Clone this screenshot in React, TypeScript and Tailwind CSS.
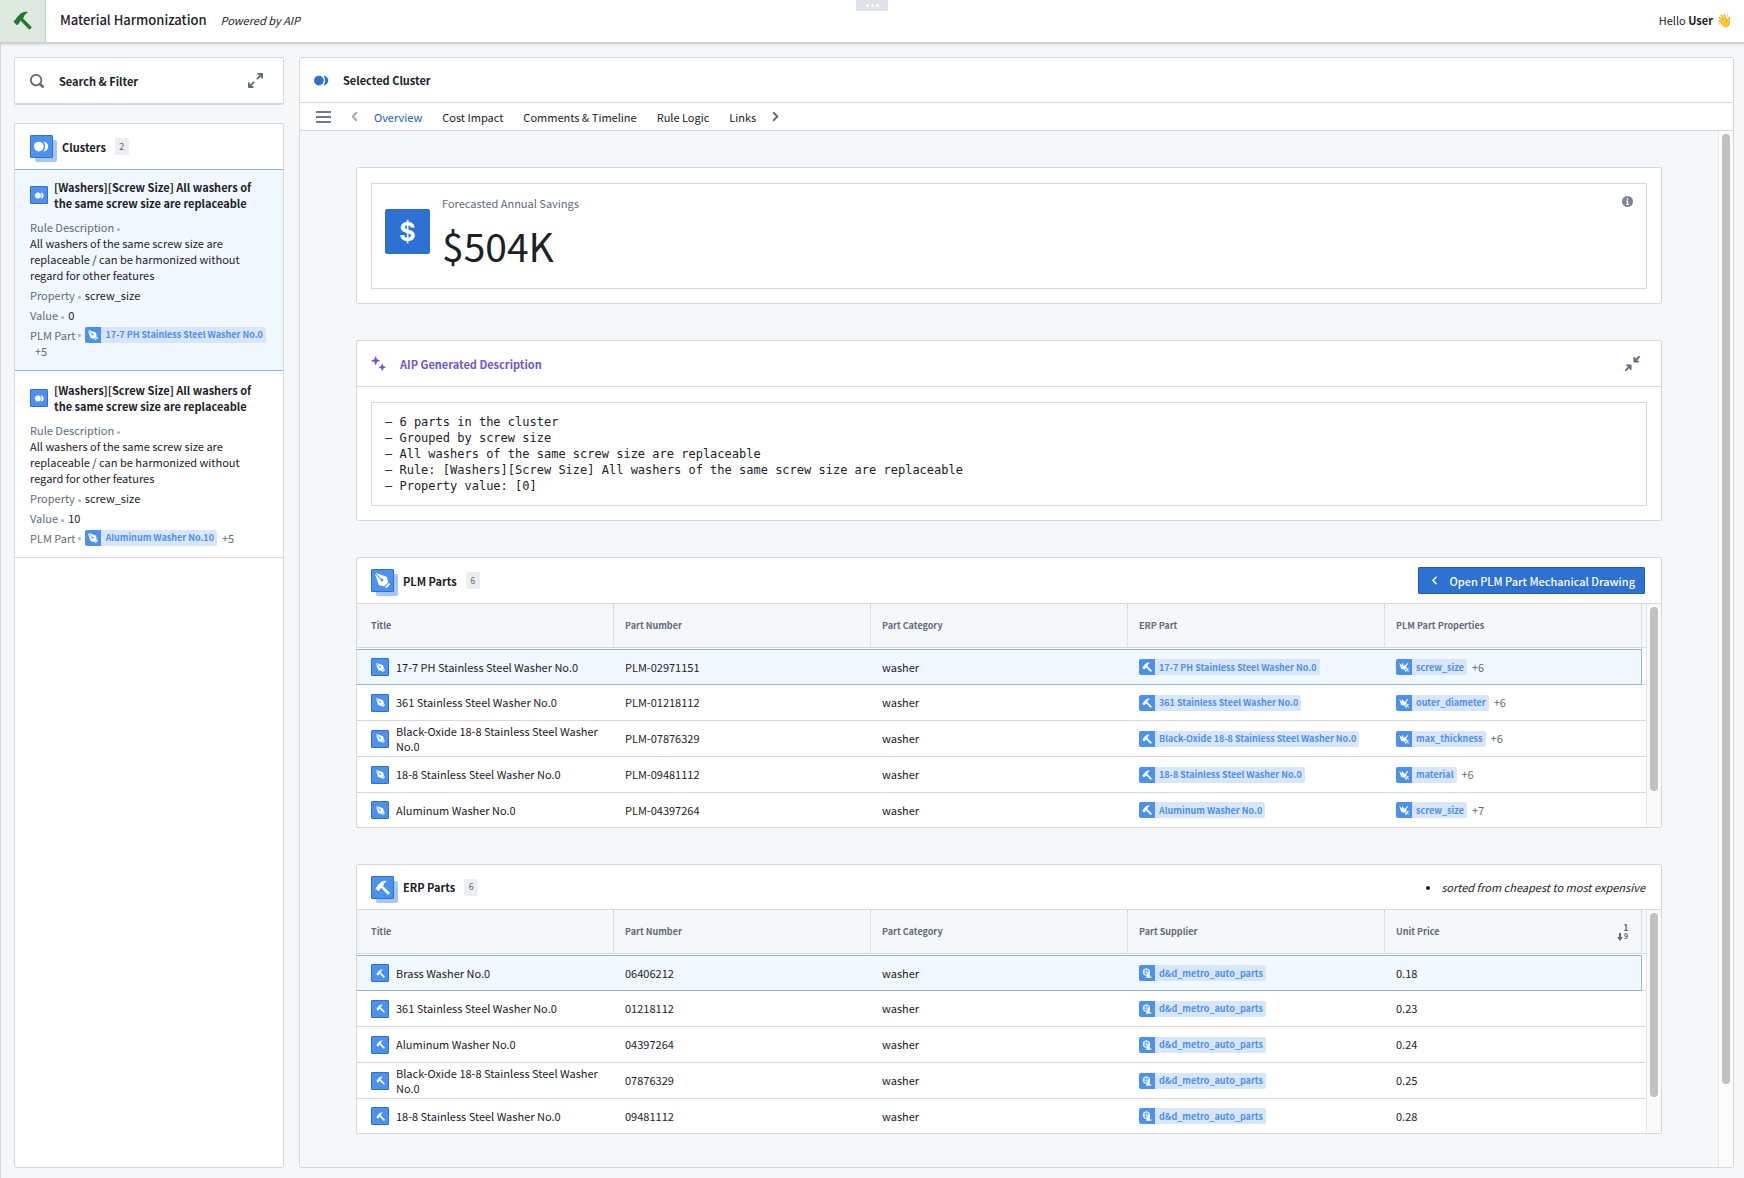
import type { ReactNode } from "react";
import clsx from "clsx";

type IconProps = { className?: string };

function HammerIcon({ className }: IconProps) {
  return (
    <svg viewBox="0 0 16 16" fill="currentColor" className={className} aria-hidden="true">
      <path d="M12.6 1C10 .3 7.6 1 5.8 2.8L3 5.6c-.4.5-.4 1-.6 1.4L.9 8.3c-.4.4-.4.8 0 1.2l2 2c.3.3.8.3 1.1 0l1.3-1.3c.3-.4.2-.9.4-1.2l.8-.8 6.6 7c.4.5 1 .5 1.5 0l.7-.8c.5-.4.5-1 0-1.4L8.3 6.2l.9-.9c-.1-1.3.8-2.4 3.4-4.3z" />
    </svg>
  );
}

function NibIcon({ className }: IconProps) {
  return (
    <svg viewBox="0 0 16 16" fill="currentColor" className={className} aria-hidden="true">
      <path d="M14.9 11c-.3 0-.5.1-.7.3l-3 3c-.2.2-.3.4-.3.7 0 .5.5 1 1 1 .3 0 .5-.1.7-.3l3-3c.2-.2.3-.4.3-.7 0-.5-.4-1-1-1zm-1-1v-.2l-1-5c-.1-.3-.3-.6-.6-.7l-11-4-.3.3 5.8 5.8c.2-.1.4-.2.6-.2.8 0 1.5.7 1.5 1.5S8.3 9 7.4 9s-1.5-.7-1.5-1.5c0-.2.1-.4.2-.6L.3 1.1l-.3.3 4 11c.1.3.4.6.7.6l5 1h.2c.3 0 .5-.1.7-.3l3-3c.2-.2.3-.4.3-.7z" />
    </svg>
  );
}

function JoinIcon({ className }: IconProps) {
  return (
    <svg viewBox="0 0 16 16" fill="currentColor" className={className} aria-hidden="true">
      <circle cx="5.2" cy="8" r="5.2" />
      <path d="M10 2.8a5.2 5.2 0 1 1 0 10.4c1.2-1.3 1.8-3.2 1.8-5.2s-.6-3.9-1.8-5.2z" />
    </svg>
  );
}

function PropertyIcon({ className }: IconProps) {
  return (
    <svg viewBox="0 0 16 16" fill="currentColor" className={className} aria-hidden="true">
      <path d="M.5 1.5l4 3.8.4-4.3 2.8 4.2 1.8.6 4-4.3 1.3 1.3-3.3 3.7.8 3-3 3L4 11c-.5-.2-.8-.5-1-1z" />
      <path d="M14.5 10.5l-4 4" stroke="currentColor" strokeWidth="2" strokeLinecap="round" />
      <circle cx="14.5" cy="14.5" r="1.2" />
    </svg>
  );
}

function SupplierIcon({ className }: IconProps) {
  return (
    <svg viewBox="0 0 16 16" className={className} aria-hidden="true">
      <circle cx="7" cy="6.5" r="5.3" fill="none" stroke="currentColor" strokeWidth="1.6" />
      <path d="M7 1.2v10M1.8 6.5h10.4M4.4 2.5c-1 2.5-1 5.5 0 8M9.6 2.5c1 2.5 1 4 .6 6" fill="none" stroke="currentColor" strokeWidth="1" />
      <circle cx="10.8" cy="8.4" r="2" fill="currentColor" />
      <path d="M8 10.2h4.6v3.3H15v2H6.5v-2H8z" fill="currentColor" />
    </svg>
  );
}

function SearchIcon({ className }: IconProps) {
  return (
    <svg viewBox="0 0 16 16" fill="currentColor" className={className} aria-hidden="true">
      <path d="M15.55 13.43l-2.67-2.68a6.94 6.94 0 001.11-3.76c0-3.87-3.13-7-7-7s-7 3.13-7 7 3.13 7 7 7c1.39 0 2.68-.42 3.76-1.11l2.68 2.67a1.498 1.498 0 102.12-2.12zm-8.56-1.44c-2.76 0-5-2.24-5-5s2.24-5 5-5 5 2.24 5 5-2.24 5-5 5z" />
    </svg>
  );
}

function MaximizeIcon({ className }: IconProps) {
  return (
    <svg viewBox="0 0 16 16" fill="currentColor" className={className} aria-hidden="true">
      <path d="M5.99 8.99c-.28 0-.53.11-.71.29l-3.29 3.29v-1.59c0-.55-.45-1-1-1s-1 .45-1 1v4c0 .55.45 1 1 1h4c.55 0 1-.45 1-1s-.45-1-1-1H3.41L6.7 10.7a1.003 1.003 0 00-.71-1.71zm9-9h-4c-.55 0-1 .45-1 1s.45 1 1 1h1.59l-3.3 3.3a.99.99 0 00-.29.7 1.003 1.003 0 001.71.71l3.29-3.29V5c0 .55.45 1 1 1s1-.45 1-1V1c0-.56-.45-1.01-1-1.01z" />
    </svg>
  );
}

function MinimizeIcon({ className }: IconProps) {
  return (
    <svg viewBox="0 0 16 16" fill="currentColor" className={className} aria-hidden="true">
      <path d="M15.99.99a1.003 1.003 0 00-1.71-.71l-3.29 3.29V1.99c0-.55-.45-1-1-1s-1 .45-1 1v4c0 .55.45 1 1 1h4c.55 0 1-.45 1-1s-.45-1-1-1h-1.59l3.3-3.3a.99.99 0 00.29-.7zm-10 8h-4c-.55 0-1 .45-1 1s.45 1 1 1h1.59l-3.3 3.3a.99.99 0 00-.29.7 1.003 1.003 0 001.71.71l3.29-3.29V14c0 .55.45 1 1 1s1-.45 1-1v-4c0-.56-.45-1.01-1-1.01z" />
    </svg>
  );
}

function SparkleIcon({ className }: IconProps) {
  return (
    <svg viewBox="0 0 16 16" fill="currentColor" className={className} aria-hidden="true">
      <path d="M5 .5l1.2 3.3L9.5 5 6.2 6.2 5 9.5 3.8 6.2.5 5l3.3-1.2zM12 8.5l1 2.5 2.5 1-2.5 1-1 2.5-1-2.5-2.5-1 2.5-1z" stroke="currentColor" strokeWidth="0.6" strokeLinejoin="round" />
    </svg>
  );
}

function ChevronIcon({ className }: IconProps) {
  return (
    <svg viewBox="0 0 16 16" fill="none" stroke="currentColor" strokeWidth="2" strokeLinecap="round" strokeLinejoin="round" className={className} aria-hidden="true">
      <path d="M10 4L6 8l4 4" />
    </svg>
  );
}

function InfoIcon({ className }: IconProps) {
  return (
    <svg viewBox="0 0 16 16" className={className} aria-hidden="true">
      <circle cx="8" cy="8" r="8" fill="currentColor" />
      <path d="M7 3h2v2H7zM6 6.5h3v5h1V13H6v-1.5h1V8H6z" fill="white" />
    </svg>
  );
}

function SortIcon() {
  return (
    <span className="flex items-end font-bold">
      <svg viewBox="0 0 6 8" fill="currentColor" className="h-2 w-[6px]" aria-hidden="true">
        <path d="M2 0h2v4h2L3 8 0 4h2z" />
      </svg>
      <span className="flex w-[6px] flex-col items-center text-[9px] leading-[9px]">
        <span>1</span>
        <span className="text-[7px]">9</span>
      </span>
    </span>
  );
}

type Icon = (props: IconProps) => ReactNode;

function Tile({ icon: Glyph }: { icon: Icon }) {
  return (
    <span className="flex size-[18px] shrink-0 items-center justify-center rounded-[1px] border border-[#2d72d2] bg-[#4c90f0] text-white">
      <Glyph className="size-[9px]" />
    </span>
  );
}

// Object set icon: a tile with a second one peeking out behind it
function StackedTile({ icon: Glyph }: { icon: Icon }) {
  return (
    <span className="relative size-[23px] shrink-0">
      <span className="absolute top-[5px] left-[5px] size-[22px] rounded-[2px] bg-[#a6c6f7]" />
      <span className="absolute inset-0 flex items-center justify-center rounded-[1px] border border-[#2d72d2] bg-[#4c90f0] text-white">
        <Glyph className="size-[15px]" />
      </span>
    </span>
  );
}

function Count({ value }: { value: number }) {
  return (
    <span className="ml-[9px] flex h-[17px] w-[14px] items-center justify-center rounded-[2px] bg-[#eceef1] text-[9px] text-[#5f6b7c]">
      {value}
    </span>
  );
}

function Chip({ icon: Glyph, label }: { icon: Icon; label: string }) {
  return (
    <a href="#" className="inline-flex h-4 items-center rounded-[2px] bg-[#d9e6fa] align-top text-[9px] font-bold text-[#4c90f0]">
      <span className="flex size-4 items-center justify-center rounded-l-[2px] bg-[#4c90f0] text-white">
        <Glyph className="size-[10px]" />
      </span>
      <span className="pr-[3px] pl-1 whitespace-nowrap">{label}</span>
    </a>
  );
}

function Dot() {
  return <span className="mr-1 ml-[3px] inline-block size-[3px] rounded-full bg-[#abb3bf] align-middle" />;
}

const clusters = [
  { value: "0", part: "17-7 PH Stainless Steel Washer No.0", selected: true },
  { value: "10", part: "Aluminum Washer No.10", selected: false },
];

function ClusterItem({ value, part, selected }: (typeof clusters)[number]) {
  return (
    <li
      className={clsx(
        "border-b pb-[11px] pl-[15px] text-[11px] leading-4",
        selected ? "border-t border-[#8fb5ee] bg-[#f2f8ff] pt-[9px]" : "border-[#d5d9de] pt-[11px]"
      )}
    >
      <div className="flex items-center gap-[6px] pr-[15px]">
        <Tile icon={JoinIcon} />
        <h3 className="font-bold">[Washers][Screw Size] All washers of the same screw size are replaceable</h3>
      </div>
      <div className="mt-2 text-[#5f6b7c]">
        Rule Description
        <Dot />
      </div>
      <p className="pr-[30px]">All washers of the same screw size are replaceable / can be harmonized without regard for other features</p>
      <div className="mt-1">
        <span className="text-[#5f6b7c]">Property</span>
        <Dot />
        screw_size
      </div>
      <div className="mt-1">
        <span className="text-[#5f6b7c]">Value</span>
        <Dot />
        {value}
      </div>
      <div className="mt-1 flex flex-wrap items-center pr-3 text-[#5f6b7c]">
        PLM Part
        <Dot />
        <Chip icon={NibIcon} label={part} />
        <span className="pl-[5px]">+5</span>
      </div>
    </li>
  );
}

type Cell = { text: string; icon?: Icon; chip?: boolean; more?: string };

function TableBody({ headings, rows, sorted }: { headings: string[]; rows: Cell[][]; sorted?: boolean }) {
  return (
    <div className="flex">
      <div className="flex-1 border-r border-[#e5e8eb]">
        <table className="w-full table-fixed border-separate border-spacing-0 text-left text-[11px] leading-[15px]">
          <thead>
            <tr>
              {headings.map((heading, i) => (
                <th key={heading} className="p-0 font-bold">
                  <div
                    className={clsx(
                      "mb-px flex h-11 items-center justify-between border-r border-b border-r-[#c5cbd3] border-b-[#d5d9de] bg-[#f6f7f9] pr-3 text-[9px] text-[#5f6b7c] [border-right-style:dotted]",
                      i === 0 ? "pl-[14px]" : "pl-[11px]"
                    )}
                  >
                    {heading}
                    {sorted && i === headings.length - 1 && <SortIcon />}
                  </div>
                </th>
              ))}
              <td className="w-1 p-0">
                <div className="mb-px h-11 border-b border-[#d5d9de] bg-[#f6f7f9]" />
              </td>
            </tr>
          </thead>
          <tbody>
            {rows.map((row, r) => (
              <tr key={row[1].text}>
                {row.map((cell, i) => (
                  <td
                    key={i}
                    className={clsx(
                      "py-0 pr-2",
                      r === rows.length - 1 ? "h-[34px]" : "h-9 border-b",
                      i === 0 ? "pl-[14px]" : "pl-[11px]",
                      r === 0 ? "border-t border-[#8fb5ee] bg-[#f2f8ff]" : "border-[#d5d9de]",
                      r === 0 && i === row.length - 1 && "border-r"
                    )}
                  >
                    {cell.chip && cell.icon ? (
                      <span className="flex items-center gap-[5px] text-[#5f6b7c]">
                        <Chip icon={cell.icon} label={cell.text} />
                        {cell.more}
                      </span>
                    ) : (
                      <span className="flex items-center gap-[7px]">
                        {cell.icon && <Tile icon={cell.icon} />}
                        {cell.text}
                      </span>
                    )}
                  </td>
                ))}
                <td className={clsx("p-0", r < rows.length - 1 && "border-b border-[#d5d9de]")} />
              </tr>
            ))}
          </tbody>
        </table>
      </div>
      <div className="flex w-[14px] justify-center bg-[#fafafa] pt-[3px]">
        <div className="h-[184px] w-2 rounded-full bg-[#c1c1c1]" />
      </div>
    </div>
  );
}

const plmRows: Cell[][] = [
  ["17-7 PH Stainless Steel Washer No.0", "PLM-02971151", "screw_size", "+6"],
  ["361 Stainless Steel Washer No.0", "PLM-01218112", "outer_diameter", "+6"],
  ["Black-Oxide 18-8 Stainless Steel Washer No.0", "PLM-07876329", "max_thickness", "+6"],
  ["18-8 Stainless Steel Washer No.0", "PLM-09481112", "material", "+6"],
  ["Aluminum Washer No.0", "PLM-04397264", "screw_size", "+7"],
].map(([title, number, property, more]) => [
  { text: title, icon: NibIcon },
  { text: number },
  { text: "washer" },
  { text: title, icon: HammerIcon, chip: true },
  { text: property, icon: PropertyIcon, chip: true, more },
]);

const erpRows: Cell[][] = [
  ["Brass Washer No.0", "06406212", "0.18"],
  ["361 Stainless Steel Washer No.0", "01218112", "0.23"],
  ["Aluminum Washer No.0", "04397264", "0.24"],
  ["Black-Oxide 18-8 Stainless Steel Washer No.0", "07876329", "0.25"],
  ["18-8 Stainless Steel Washer No.0", "09481112", "0.28"],
].map(([title, number, price]) => [
  { text: title, icon: HammerIcon },
  { text: number },
  { text: "washer" },
  { text: "d&d_metro_auto_parts", icon: SupplierIcon, chip: true },
  { text: price },
]);

const tabs = ["Overview", "Cost Impact", "Comments & Timeline", "Rule Logic", "Links"];

const description = `– 6 parts in the cluster
– Grouped by screw size
– All washers of the same screw size are replaceable
– Rule: [Washers][Screw Size] All washers of the same screw size are replaceable
– Property value: [0]`;

const card = "rounded-[2px] border border-[#d5d9de] bg-white";

export default function App() {
  return (
    <div className="flex h-screen flex-col bg-[#f5f7f9] font-['Noto_Sans_CJK_SC','Source_Sans_Pro',sans-serif] text-[11px] leading-4 text-[#1c2127]">
      <header className="relative flex h-11 shrink-0 items-center border-b-2 border-[#cfd1d3] bg-white shadow-[0_1px_2px_rgba(17,20,24,0.1)]">
        <div className="flex h-full w-[46px] items-center justify-center border-r border-[#c5cbc6] bg-[#deeadf] pb-[2px] text-[#1f7a2c]">
          <HammerIcon className="size-[19px]" />
        </div>
        <div className="flex flex-1 items-center pr-3 pb-[2px] pl-[14px]">
          <h1 className="text-[13px] font-medium">Material Harmonization</h1>
          <p className="ml-[14px] italic">Powered by AIP</p>
          <p className="ml-auto flex items-center gap-[3px]">
            <span>
              Hello <b>User</b>
            </span>
            <span className="text-[13px]">👋</span>
          </p>
        </div>
        <div className="absolute top-0 left-1/2 flex h-[11px] w-8 -translate-x-1/2 items-center justify-center gap-[2px] rounded-b-[2px] bg-[#dfe2e6]">
          <span className="size-[3px] rounded-full bg-white" />
          <span className="size-[3px] rounded-full bg-white" />
          <span className="size-[3px] rounded-full bg-white" />
        </div>
      </header>

      <div className="flex min-h-0 flex-1 gap-[15px] border-l border-[#d5d9de] pt-[13px] pr-[10px] pb-[10px] pl-[13px]">
        <aside className="flex w-[270px] shrink-0 flex-col gap-[18px]">
          <section className="flex h-12 shrink-0 items-center rounded-[2px] border border-b-2 border-[#d5d9de] bg-white px-[15px]">
            <SearchIcon className="size-[14px] text-[#5f6b7c]" />
            <h2 className="ml-[15px] flex-1 font-bold">Search &amp; Filter</h2>
            <button aria-label="Expand" className="mr-[5px] text-[#5f6b7c]">
              <MaximizeIcon className="size-[15px]" />
            </button>
          </section>
          <section className={clsx(card, "min-h-0 flex-1")}>
            <div className="flex h-[45px] items-center px-[15px]">
              <StackedTile icon={JoinIcon} />
              <h2 className="ml-[9px] font-bold">Clusters</h2>
              <Count value={2} />
            </div>
            <ul>
              {clusters.map((cluster) => (
                <ClusterItem key={cluster.value} {...cluster} />
              ))}
            </ul>
          </section>
        </aside>

        <main className={clsx(card, "flex min-w-0 flex-1 flex-col")}>
          <div className="flex h-[45px] shrink-0 items-center border-b border-[#d5d9de] px-[14px]">
            <JoinIcon className="size-[15px] text-[#2d72d2]" />
            <h2 className="ml-[14px] font-bold">Selected Cluster</h2>
          </div>
          <nav className="flex h-7 shrink-0 items-center border-b border-[#d5d9de] pl-4">
            <button aria-label="All tabs" className="flex w-[15px] flex-col gap-[3px]">
              <span className="h-[2px] bg-[#717a88]" />
              <span className="h-[2px] bg-[#717a88]" />
              <span className="h-[2px] bg-[#717a88]" />
            </button>
            <button aria-label="Previous tab" className="ml-4 text-[#a3a9b3]">
              <ChevronIcon className="size-[15px]" />
            </button>
            <div className="ml-3 flex gap-5">
              {tabs.map((tab, i) => (
                <a key={tab} href="#" className={clsx(i === 0 && "text-[#215db0]")}>
                  {tab}
                </a>
              ))}
            </div>
            <button aria-label="Next tab" className="ml-3 rotate-180 text-[#5f6b7c]">
              <ChevronIcon className="size-[15px]" />
            </button>
          </nav>

          <div className="flex min-h-0 flex-1">
            <div className="flex min-w-0 flex-1 flex-col gap-9 overflow-hidden bg-[#f5f7f9] px-14 pt-9">
              <section className={clsx(card, "shrink-0 p-[14px] pt-[15px]")}>
                <div className="flex h-[106px] items-start border border-[#d5d9de] px-[13px]">
                  <span className="mt-[25px] flex size-[45px] items-center justify-center rounded-[2px] bg-[#2d72d2] font-[Inter] text-[25px] font-bold text-white">$</span>
                  <div className="ml-3 flex-1 pt-[11px]">
                    <h2 className="text-[#5f6b7c]">Forecasted Annual Savings</h2>
                    <p className="mt-[14px] text-[39px] leading-10">$504K</p>
                  </div>
                  <InfoIcon className="mt-3 size-[11px] text-[#7b8492]" />
                </div>
              </section>

              <section className={clsx(card, "shrink-0")}>
                <div className="flex h-[46px] items-center border-b border-[#d5d9de] pr-[21px] pl-[14px] text-[#6f57d0]">
                  <SparkleIcon className="size-[15px]" />
                  <h2 className="ml-[14px] flex-1 font-bold">AIP Generated Description</h2>
                  <button aria-label="Collapse" className="text-[#5f6b7c]">
                    <MinimizeIcon className="size-[15px]" />
                  </button>
                </div>
                <div className="p-[14px] pt-[15px]">
                  <pre className="border border-[#d5d9de] px-[13px] py-[11px] font-['DejaVu_Sans_Mono',monospace] text-[12px] leading-4">
                    {description}
                  </pre>
                </div>
              </section>

              <section className={clsx(card, "shrink-0")}>
                <div className="flex h-[46px] items-center border-b border-[#d5d9de] pr-4 pl-[14px]">
                  <StackedTile icon={NibIcon} />
                  <h2 className="ml-[9px] font-bold">PLM Parts</h2>
                  <Count value={6} />
                  <button className="ml-auto flex h-[27px] items-center rounded-[1px] border border-[#215db0] bg-[#2d72d2] px-[9px] font-medium text-white">
                    <ChevronIcon className="mr-2 size-[13px]" />
                    Open PLM Part Mechanical Drawing
                  </button>
                </div>
                <TableBody headings={["Title", "Part Number", "Part Category", "ERP Part", "PLM Part Properties"]} rows={plmRows} />
              </section>

              <section className={clsx(card, "shrink-0")}>
                <div className="flex h-[45px] items-center border-b border-[#d5d9de] pr-4 pl-[14px]">
                  <StackedTile icon={HammerIcon} />
                  <h2 className="ml-[9px] font-bold">ERP Parts</h2>
                  <Count value={6} />
                  <ul className="ml-auto list-disc italic">
                    <li>sorted from cheapest to most expensive</li>
                  </ul>
                </div>
                <TableBody headings={["Title", "Part Number", "Part Category", "Part Supplier", "Unit Price"]} rows={erpRows} sorted />
              </section>
            </div>
            <div className="flex w-[15px] justify-center border-l border-[#e5e8eb] bg-[#fbfbfb] pt-[3px]">
              <div className="h-[92%] w-2 rounded-full bg-[#c1c1c1]" />
            </div>
          </div>
        </main>
      </div>
    </div>
  );
}
